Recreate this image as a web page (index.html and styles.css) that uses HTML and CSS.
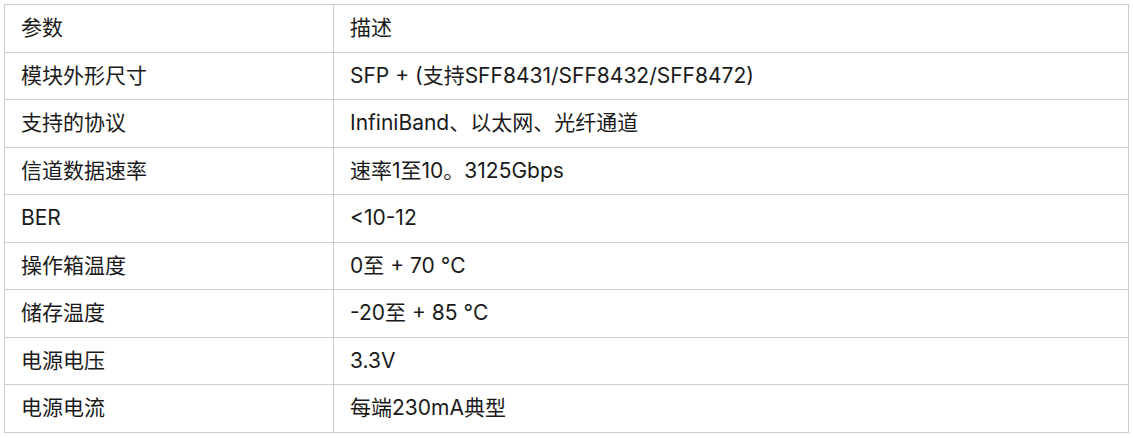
FILE: index.html
```html
<!DOCTYPE html>
<html lang="zh">
<head>
<meta charset="utf-8">
<link rel="stylesheet" href="styles.css">
</head>
<body>
<table class="spec">
  <tbody>
    <tr><td class="k">参数</td><td>描述</td></tr>
    <tr><td class="k">模块外形尺寸</td><td>SFP + (支持SFF8431/SFF8432/SFF8472)</td></tr>
    <tr><td class="k">支持的协议</td><td>InfiniBand、以太网、光纤通道</td></tr>
    <tr><td class="k">信道数据速率</td><td>速率1至10。3125Gbps</td></tr>
    <tr><td class="k">BER</td><td>&lt;10-12</td></tr>
    <tr><td class="k">操作箱温度</td><td>0至 + 70 °C</td></tr>
    <tr><td class="k">储存温度</td><td>-20至 + 85 °C</td></tr>
    <tr><td class="k">电源电压</td><td>3.3V</td></tr>
    <tr><td class="k">电源电流</td><td>每端230mA典型</td></tr>
  </tbody>
</table>
</body>
</html>
```
FILE: styles.css
```css
html, body {
  margin: 0;
  padding: 0;
  background: #fff;
}
body {
  padding: 4px 4px 0 4px;
  font-family: Inter, "Noto Sans CJK SC", sans-serif;
  font-size: 21px;
  color: #1a1a1a;
}
.spec {
  width: 1125px;
  border-collapse: collapse;
}
.spec td {
  border: 1px solid #cccccc;
  padding: 8.25px 16px;
  line-height: 30px;
  text-align: left;
  vertical-align: middle;
}
.spec td.k {
  width: 296px;
}
```
